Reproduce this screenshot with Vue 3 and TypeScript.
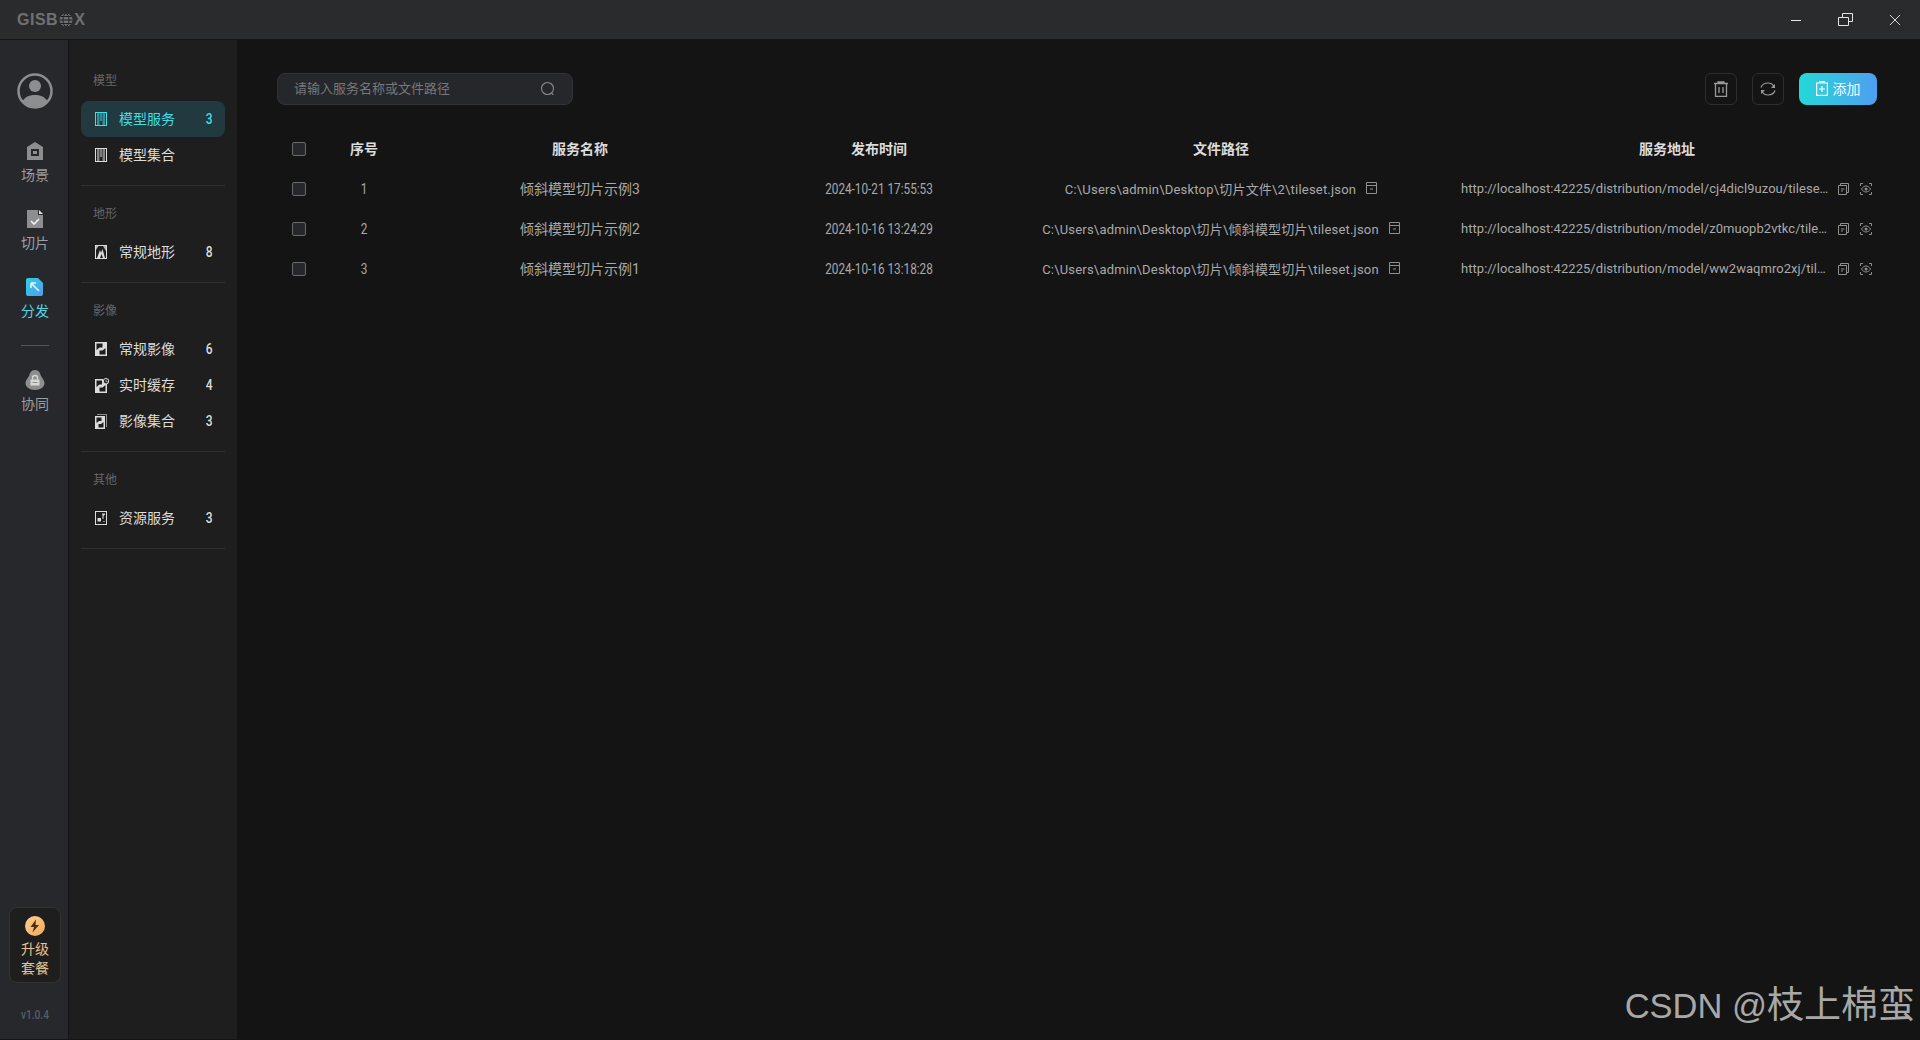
<template>
  <div class="app">
    <header class="titlebar">
      <div class="logo">
        <span>GISB</span>
        <svg width="16" height="14" viewBox="0 0 16 14" fill="none" stroke="#1f2022" stroke-width="1">
          <circle cx="8" cy="7" r="6.500" fill="#6f7072" stroke="none" />
          <ellipse cx="8" cy="7" rx="3" ry="6.500" />
          <path d="M1.500 7h13M2.500 3.500h11M2.500 10.500h11" />
        </svg>
        <span>X</span>
      </div>
      <div class="win-controls">
        <svg width="12" height="12" viewBox="0 0 12 12" fill="none" stroke="#e6e6e6"><path d="M1 6.500h10" /></svg>
        <svg width="15" height="13" viewBox="0 0 15 13" fill="none" stroke="#e6e6e6"><path d="M.5 4.500h10v8H.5zM4.500 4.500V.5h10v8h-4" /></svg>
        <svg width="12" height="12" viewBox="0 0 12 12" fill="none" stroke="#d8d8d8"><path d="M1 1l10 10M11 1L1 11" /></svg>
      </div>
    </header>

    <div class="body">
      <nav class="rail">
        <svg class="avatar" width="36" height="36" viewBox="0 0 36 36">
          <circle cx="18" cy="18" r="16.500" fill="none" stroke="#8e8e91" stroke-width="2.500" />
          <circle cx="18" cy="13" r="6" fill="#8e8e91" />
          <path d="M5.500 28c3-4.500 7.500-6 12.500-6s9.500 1.500 12.500 6A16 16 0 0 1 18 34 16 16 0 0 1 5.500 28z" fill="#8e8e91" />
        </svg>

        <a class="rail-item">
          <svg width="20" height="20" viewBox="0 0 20 20">
            <path fill="#8e8e91" fill-rule="evenodd" d="M2 6l8-5 8 5v13H2zM6 8v7h8V8zM8 10h4v3H8z" />
          </svg>
          <span>场景</span>
        </a>
        <a class="rail-item">
          <svg width="20" height="20" viewBox="0 0 20 20">
            <path fill="#8e8e91" d="M2 1h11v5h5v13H2z" />
            <path fill="#e2e2e2" d="M14 1l4 4h-4z" />
            <path fill="none" stroke="#f0f0f0" stroke-width="1.600" d="M6 12l3 3 5-5" />
          </svg>
          <span>切片</span>
        </a>
        <a class="rail-item active">
          <svg width="20" height="20" viewBox="0 0 20 20">
            <defs>
              <linearGradient id="railBlue" x1="0" y1="0" x2="1" y2="1">
                <stop offset="0" stop-color="#2fd0e0" />
                <stop offset="1" stop-color="#4e9df0" />
              </linearGradient>
            </defs>
            <path fill="url(#railBlue)" d="M3 1h10l5 5v11a2 2 0 0 1-2 2H3a2 2 0 0 1-2-2V3a2 2 0 0 1 2-2z" />
            <path fill="none" stroke="#eef" stroke-width="1.600" d="M6 6h5M6 6v5M6 6l8 8" />
          </svg>
          <span>分发</span>
        </a>
        <div class="rail-divider"></div>
        <a class="rail-item">
          <svg width="20" height="20" viewBox="0 0 20 20">
            <path fill="#8e8e91" d="M10 0c4 0 5 3 6 6 1 2 3.500 4 3.500 7 0 4-4 7-9.500 7S.5 17 .5 13c0-3 2.500-5 3.500-7 1-3 2-6 6-6z" />
            <path fill="#d8d8d8" d="M5.500 9.500h9v6h-9z" />
            <path fill="none" stroke="#d8d8d8" stroke-width="1.300" d="M7.500 9.500V8a2.500 2.500 0 0 1 5 0v1.500" />
            <path fill="#8e8e91" d="M7.500 12h5v1h-5z" />
          </svg>
          <span>协同</span>
        </a>

        <div class="upgrade">
          <svg width="20" height="20" viewBox="0 0 20 20">
            <defs>
              <linearGradient id="goldFill" x1="0" y1="0" x2="1" y2="1">
                <stop offset="0" stop-color="#ffcf8c" />
                <stop offset="1" stop-color="#f3a95c" />
              </linearGradient>
            </defs>
            <circle cx="10" cy="10" r="10" fill="url(#goldFill)" />
            <path fill="#4a2f12" d="M11 3.500L5.500 11H9l-1.500 5.500L14 9h-3.500z" />
          </svg>
          <span>升级</span>
          <span>套餐</span>
        </div>
        <div class="version">v1.0.4</div>
      </nav>

      <aside class="sidebar">
        <section v-for="group in groups" :key="group.title" class="group">
          <div class="group-title">{{ group.title }}</div>
          <a v-for="item in group.items" :key="item.name" class="side-item" :class="{ active: item.active }">
            <svg class="side-icon" width="12" height="14" viewBox="0 0 12 14">
              <path
                v-for="(p, i) in icons[item.icon]"
                :key="i"
                :d="p.d"
                :opacity="p.o ?? 1"
                fill="currentColor"
                fill-rule="evenodd"
              />
            </svg>
            <span class="side-name">{{ item.name }}</span>
            <span v-if="item.count" class="side-count">{{ item.count }}</span>
          </a>
        </section>
      </aside>

      <main class="main">
        <div class="toolbar">
          <div class="search">
            <input class="search-input" placeholder="请输入服务名称或文件路径" />
            <svg width="16" height="16" viewBox="0 0 16 16" fill="none" stroke="#8a8a8a" stroke-width="1.100">
              <circle cx="7.500" cy="7.500" r="6" />
              <path d="M11.500 12l1.800 1.800" />
            </svg>
          </div>
          <div class="actions">
            <button class="icon-btn">
              <svg width="14" height="16" viewBox="0 0 14 16" fill="none" stroke="#9a9a9a" stroke-width="1.300">
                <path d="M0 2.500h14M4 2.500V1h6v1.500M1.500 2.500v13h11v-13M5 6v6M9 6v6" />
              </svg>
            </button>
            <button class="icon-btn">
              <svg width="16" height="16" viewBox="0 0 16 16" fill="none" stroke="#9a9a9a" stroke-width="1.200">
                <path d="M1 6.500C2 3.500 4.500 2 8 2c2.500 0 4.500 1 5.500 3M15 9.500c-1 3-3.500 4.500-7 4.500-2.500 0-4.500-1-5.500-3" />
                <path fill="#9a9a9a" stroke="none" d="M15 3v4h-4zM1 13V9h4z" />
              </svg>
            </button>
            <button class="add-btn">
              <svg width="12" height="15" viewBox="0 0 12 15" fill="none" stroke="#fff" stroke-width="1.200">
                <path d="M.6 2h10.800v12.400H.6zM3 .6h6M6 5v6M3 8h6" />
              </svg>
              添加
            </button>
          </div>
        </div>

        <div class="table">
          <div class="row head">
            <div class="cell"><span class="checkbox"></span></div>
            <div class="cell">序号</div>
            <div class="cell">服务名称</div>
            <div class="cell">发布时间</div>
            <div class="cell">文件路径</div>
            <div class="cell url-head">服务地址</div>
          </div>
          <div v-for="(row, i) in rows" :key="row.url" class="row">
            <div class="cell"><span class="checkbox"></span></div>
            <div class="cell num">{{ i + 1 }}</div>
            <div class="cell name-cell">{{ row.name }}</div>
            <div class="cell num">{{ row.time }}</div>
            <div class="cell path-cell">
              <span>{{ row.path }}</span>
              <svg width="11" height="12" viewBox="0 0 11 12" fill="none" stroke="#8f8f8f">
                <path d="M.5.5h10v11H.5zM.5 3.500h10M4 7h3" />
              </svg>
            </div>
            <div class="cell url-cell">
              <span class="url-text">{{ row.url }}</span>
              <svg width="11" height="12" viewBox="0 0 11 12" fill="none" stroke="#8f8f8f">
                <path d="M.5 2.500h8v9h-8zM2.500 2.500V.5h8v9h-2M3 6h3.500M3 8h2" />
              </svg>
              <svg class="eye" width="12" height="12" viewBox="0 0 12 12" fill="none" stroke="#8f8f8f">
                <path d="M.5 3V.5H3M9 .5h2.500V3M.5 9v2.500H3M11.500 9v2.500H9" />
                <path d="M1.500 6C3 3.800 4.500 3 6 3s3 .8 4.500 3C9 8.200 7.500 9 6 9S3 8.200 1.500 6z" />
                <circle cx="6" cy="6" r="1.500" fill="#8f8f8f" stroke="none" />
              </svg>
            </div>
          </div>
        </div>
      </main>
    </div>

    <div class="watermark"><span class="wm-latin">CSDN @</span>枝上棉蛮</div>
  </div>
</template>

<script setup lang="ts">
interface IconPart {
  d: string
  o?: number
}

interface SideItem {
  name: string
  icon: string
  count?: number
  active?: boolean
}

const frame = 'M0 0h12v14H0zM1 1v12h10V1z'

const icons: Record<string, IconPart[]> = {
  model: [{ d: frame }, { d: 'M2 1h2.500v12H2zM7.500 1H10v12H7.500z', o: 0.55 }, { d: 'M5.500 1h1v8h-1z' }],
  terrain: [{ d: frame }, { d: 'M1 1h2.500L1 5zM11 1H8l3 5z', o: 0.8 }, { d: 'M2 13l3-8 1 3 1.500-4 2.500 9H8L6.500 9 5 13z' }],
  image: [{ d: 'M0 0h12v14H0zM1.500 1.500V8l3-2.500h3V1.500zM10.500 12.500V6l-3 2.500h-3v4z' }],
  cache: [
    { d: 'M0 1h8v2.500A3.500 3.500 0 0 0 12 6v9H0zM1.500 2.500V9l3-2.500h2.500v-4zM10.500 13.500V7l-3 2.500h-3v4z' },
    { d: 'M11 0a3.200 3.200 0 1 1-.01 0zM11 1a2.200 2.200 0 1 0 .01 0z' },
    { d: 'M10.700 1.800h.7v1.600h1.200v.7h-1.900z' }
  ],
  collection: [
    { d: 'M0 2h10v13H0zM1.500 3.500V9l2.500-2h2.500V3.500zM8.500 13.500V8L6 10H3.500v3.500z' },
    { d: 'M2 0h10v13h-1V1H2z', o: 0.6 }
  ],
  resource: [{ d: frame }, { d: 'M7 2.500h3v1L8.500 5v3H7.500V4.500zM2.500 7h3.500v3.500H2.500z' }, { d: 'M8 10h2v1H8z', o: 0.6 }]
}

const groups: { title: string; items: SideItem[] }[] = [
  {
    title: '模型',
    items: [
      { name: '模型服务', icon: 'model', count: 3, active: true },
      { name: '模型集合', icon: 'model' }
    ]
  },
  { title: '地形', items: [{ name: '常规地形', icon: 'terrain', count: 8 }] },
  {
    title: '影像',
    items: [
      { name: '常规影像', icon: 'image', count: 6 },
      { name: '实时缓存', icon: 'cache', count: 4 },
      { name: '影像集合', icon: 'collection', count: 3 }
    ]
  },
  { title: '其他', items: [{ name: '资源服务', icon: 'resource', count: 3 }] }
]

const rows = [
  {
    name: '倾斜模型切片示例3',
    time: '2024-10-21 17:55:53',
    path: 'C:\\Users\\admin\\Desktop\\切片文件\\2\\tileset.json',
    url: 'http://localhost:42225/distribution/model/cj4dicl9uzou/tileset.json'
  },
  {
    name: '倾斜模型切片示例2',
    time: '2024-10-16 13:24:29',
    path: 'C:\\Users\\admin\\Desktop\\切片\\倾斜模型切片\\tileset.json',
    url: 'http://localhost:42225/distribution/model/z0muopb2vtkc/tileset.json'
  },
  {
    name: '倾斜模型切片示例1',
    time: '2024-10-16 13:18:28',
    path: 'C:\\Users\\admin\\Desktop\\切片\\倾斜模型切片\\tileset.json',
    url: 'http://localhost:42225/distribution/model/ww2waqmro2xj/tileset.json'
  }
]
</script>

<style>
html,
body {
  margin: 0;
  background: #141414;
}
</style>

<style scoped>
.app {
  position: relative;
  height: 100vh;
  display: flex;
  flex-direction: column;
  background: #141414;
  color: #a9a9a9;
  font-family: Roboto, "Noto Sans CJK SC", sans-serif;
  font-size: 13px;
  overflow: hidden;
}

.titlebar {
  height: 40px;
  flex: none;
  box-sizing: border-box;
  display: flex;
  align-items: center;
  justify-content: space-between;
  background: #2a2b2d;
  border-bottom: 1px solid #161616;
  padding: 0 19px 0 17px;
}

.logo {
  display: flex;
  align-items: center;
  color: #6f7072;
  font-family: "Liberation Sans", sans-serif;
  font-weight: 700;
  font-size: 16px;
  letter-spacing: 0.500px;
}

.win-controls {
  display: flex;
  align-items: center;
  gap: 36px;
}

.body {
  flex: 1;
  display: flex;
  min-height: 0;
  padding-bottom: 1px;
}

.rail {
  width: 69px;
  flex: none;
  box-sizing: border-box;
  display: flex;
  flex-direction: column;
  align-items: center;
  background: #27282b;
  border-right: 1px solid #141414;
  padding: 33px 0 0 2px;
}

.avatar {
  margin-bottom: 32px;
}

.rail-item {
  height: 44px;
  margin-bottom: 24px;
  display: flex;
  flex-direction: column;
  align-items: center;
  gap: 4px;
  font-size: 14px;
  line-height: 20px;
  color: #9b9ea3;
}

.rail-item.active {
  color: #55d4e6;
}

.rail-divider {
  width: 28px;
  height: 1px;
  background: #55565a;
  margin-bottom: 24px;
}

.upgrade {
  margin-top: auto;
  width: 52px;
  height: 76px;
  box-sizing: border-box;
  padding-top: 8px;
  display: flex;
  flex-direction: column;
  align-items: center;
  background: #1e1e1f;
  border: 1px solid #36322d;
  border-radius: 8px;
  font-size: 14px;
  line-height: 19px;
  color: #e5c393;
}

.upgrade span:first-of-type {
  margin-top: 4px;
}

.version {
  margin: 24px 0 16px;
  font-size: 13px;
  font-weight: 500;
  line-height: 16px;
  color: #565d69;
  transform: scaleX(0.78);
}

.sidebar {
  width: 168px;
  flex: none;
  box-sizing: border-box;
  background: #1e1e1e;
  padding: 32px 12px 0;
}

.group {
  padding-bottom: 12px;
  border-bottom: 1px solid #303030;
  margin-bottom: 19px;
}

.group-title {
  padding: 1px 0 0 12px;
  font-size: 12px;
  line-height: 16px;
  color: #666;
  margin-bottom: 12px;
}

.side-item {
  height: 36px;
  display: flex;
  align-items: center;
  padding: 0 12px 0 14px;
  border-radius: 8px;
  color: #dcdcdc;
  font-size: 14px;
}

.side-item.active {
  background: #21393f;
  color: #3fdde6;
}

.side-icon {
  flex: none;
  margin-right: 12px;
  overflow: visible;
}

.side-name {
  flex: 1;
  padding-bottom: 2px;
}

.side-count {
  font-size: 15px;
  font-weight: 500;
  transform: scaleX(0.8);
  transform-origin: right center;
}

.main {
  flex: 1;
  min-width: 0;
  padding: 33px 43px 0 40px;
}

.toolbar {
  display: flex;
  justify-content: space-between;
  margin-bottom: 24px;
}

.search {
  width: 296px;
  height: 32px;
  box-sizing: border-box;
  display: flex;
  align-items: center;
  padding: 0 16px;
  background: #26272a;
  border: 1px solid #333438;
  border-radius: 8px;
}

.search-input {
  flex: 1;
  min-width: 0;
  background: none;
  border: 0;
  outline: 0;
  padding: 0 0 2px;
  font: inherit;
  color: #a9a9a9;
}

.search-input::placeholder {
  color: #77787c;
}

.actions {
  display: flex;
  gap: 15px;
}

.icon-btn {
  width: 32px;
  height: 32px;
  padding: 0;
  display: flex;
  align-items: center;
  justify-content: center;
  background: none;
  border: 1px solid #2e2e30;
  border-radius: 6px;
}

.add-btn {
  width: 78px;
  height: 32px;
  display: flex;
  align-items: center;
  justify-content: center;
  gap: 5px;
  padding: 0 0 2px;
  border: 0;
  border-radius: 8px;
  background: linear-gradient(90deg, #24d8d8, #4f9ef0);
  color: #f2fbff;
  font: inherit;
  font-size: 14px;
}

.row {
  height: 40px;
  display: grid;
  grid-template-columns: 44px 86px 346px 252px 432px 440px;
  align-items: center;
}

.cell {
  display: flex;
  align-items: center;
  justify-content: center;
  min-width: 0;
}

.cell + .cell {
  padding-bottom: 2px;
}

.head {
  color: #dcdcdc;
  font-size: 14px;
  font-weight: 700;
}

.row .num {
  padding-bottom: 0;
  font-size: 14px;
  transform: scaleX(0.84);
}

.name-cell {
  font-size: 14px;
}

.checkbox {
  width: 14px;
  height: 14px;
  box-sizing: border-box;
  background: #26272b;
  border: 1px solid #6a6a6a;
  border-radius: 2px;
}

.path-cell {
  gap: 10px;
  letter-spacing: 0.200px;
}

.url-head {
  padding-left: 20px;
}

.row .url-cell {
  justify-content: flex-start;
  padding: 0 5px 1px 24px;
  gap: 8px;
  letter-spacing: 0.050px;
}

.eye {
  margin-left: 3px;
}

.url-text {
  flex: 1;
  min-width: 0;
  overflow: hidden;
  white-space: nowrap;
  text-overflow: ellipsis;
}

.watermark {
  position: absolute;
  right: 5px;
  bottom: 12px;
  font-family: "Liberation Sans", "Noto Sans CJK SC", sans-serif;
  font-size: 37px;
  line-height: 44px;
  color: #a8a8a8;
}

.wm-latin {
  font-size: 34.500px;
}
</style>
